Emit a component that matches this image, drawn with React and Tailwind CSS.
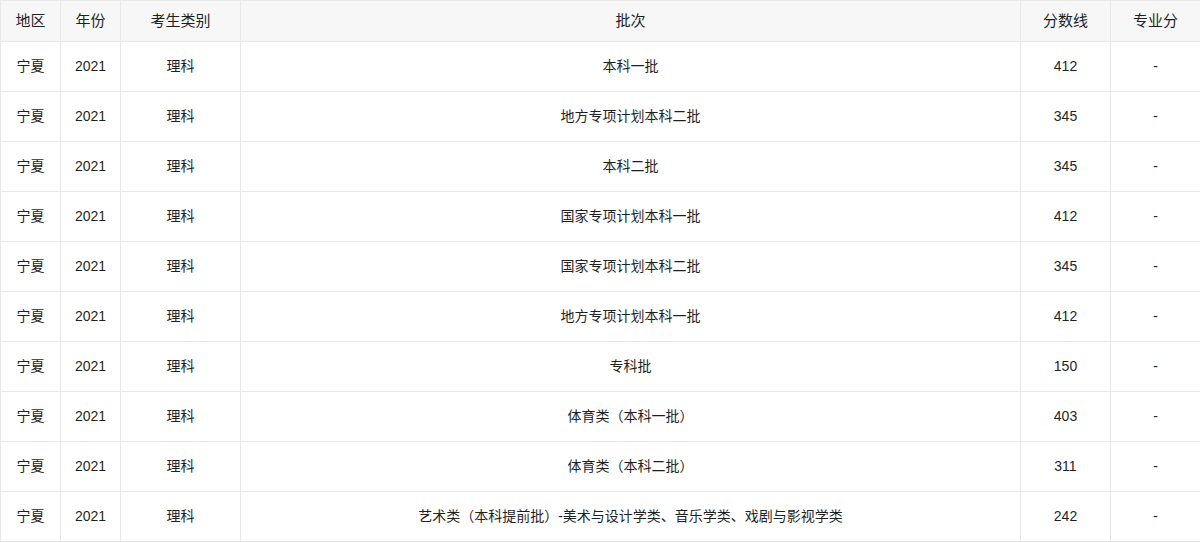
const rows = [
  ['本科一批', '412'],
  ['地方专项计划本科二批', '345'],
  ['本科二批', '345'],
  ['国家专项计划本科一批', '412'],
  ['国家专项计划本科二批', '345'],
  ['地方专项计划本科一批', '412'],
  ['专科批', '150'],
  ['体育类（本科一批）', '403'],
  ['体育类（本科二批）', '311'],
  ['艺术类（本科提前批）-美术与设计学类、音乐学类、戏剧与影视学类', '242'],
];

export default function App() {
  return (
    <div className="w-[1200px] bg-white text-[#1f1f1f] font-['Helvetica','Liberation_Sans','Noto_Sans_CJK_SC',sans-serif]">
      <table className="w-[1200px] table-fixed border-collapse text-center">
        <colgroup>
          <col className="w-[60px]" />
          <col className="w-[60px]" />
          <col className="w-[120px]" />
          <col className="w-[780px]" />
          <col className="w-[90px]" />
          <col className="w-[90px]" />
        </colgroup>
        <thead>
          <tr className="h-[41px] bg-[#f7f7f7] text-[15px]">
            {['地区', '年份', '考生类别', '批次', '分数线', '专业分'].map(h => (
              <th key={h} className="border border-[#e8e8e8] font-normal p-0">{h}</th>
            ))}
          </tr>
        </thead>
        <tbody>
          {rows.map(([batch, score], i) => (
            <tr key={i} className="h-[50px] text-[14px]">
              <td className="border border-[#e8e8e8] p-0">宁夏</td>
              <td className="border border-[#e8e8e8] p-0">2021</td>
              <td className="border border-[#e8e8e8] p-0">理科</td>
              <td className="border border-[#e8e8e8] p-0">{batch}</td>
              <td className="border border-[#e8e8e8] p-0">{score}</td>
              <td className="border border-[#e8e8e8] p-0">-</td>
            </tr>
          ))}
        </tbody>
      </table>
    </div>
  );
}
